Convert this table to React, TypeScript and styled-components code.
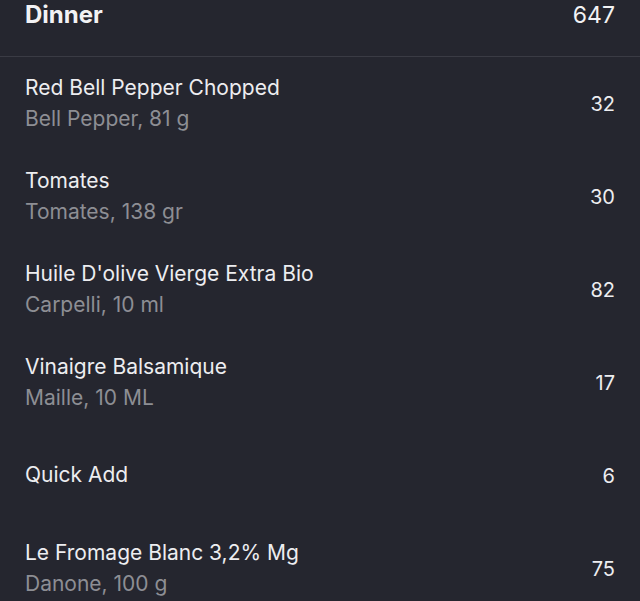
import React from "react";
import styled, { createGlobalStyle } from "styled-components";

const Global = createGlobalStyle`
  html, body { margin: 0; padding: 0; background: #25262f; }
  body { font-family: Inter, "Noto Sans", sans-serif; -webkit-font-smoothing: antialiased; }
`;

const Page = styled.div`
  width: 640px;
  height: 601px;
  overflow: hidden;
  background: #25262f;
`;

const Header = styled.div`
  display: flex;
  justify-content: space-between;
  align-items: flex-start;
  height: 57px;
  padding: 1px 25px 0 25px;
  box-sizing: border-box;
  border-bottom: 1px solid #3a3b44;
`;

const HeaderTitle = styled.div`
  font-size: 24px;
  font-weight: 700;
  line-height: 28px;
  color: #f2f2f4;
`;

const HeaderValue = styled.div`
  font-size: 23px;
  font-weight: 400;
  line-height: 28px;
  color: #f2f2f4;
`;

const Row = styled.div`
  display: flex;
  justify-content: space-between;
  align-items: center;
  height: 93px;
  padding: 0 25px;
  box-sizing: border-box;
`;

const Texts = styled.div`
  display: flex;
  flex-direction: column;
  gap: 6px;
  padding-bottom: 2px;
`;

const Title = styled.div`
  font-size: 21px;
  line-height: 25px;
  color: #ededf0;
`;

const Sub = styled.div`
  font-size: 21px;
  line-height: 25px;
  color: #8d8e94;
`;

const Value = styled.div`
  font-size: 20px;
  line-height: 24px;
  color: #ededf0;
`;

const items = [
  { t: "Red Bell Pepper Chopped", s: "Bell Pepper, 81 g", v: 32 },
  { t: "Tomates", s: "Tomates, 138 gr", v: 30 },
  { t: "Huile D'olive Vierge Extra Bio", s: "Carpelli, 10 ml", v: 82 },
  { t: "Vinaigre Balsamique", s: "Maille, 10 ML", v: 17 },
  { t: "Quick Add", s: "", v: 6 },
  { t: "Le Fromage Blanc 3,2% Mg", s: "Danone, 100 g", v: 75 },
];

export default function App() {
  return (
    <Page>
      <Global />
      <Header>
        <HeaderTitle>Dinner</HeaderTitle>
        <HeaderValue>647</HeaderValue>
      </Header>
      {items.map((it) => (
        <Row key={it.t}>
          <Texts>
            <Title>{it.t}</Title>
            {it.s && <Sub>{it.s}</Sub>}
          </Texts>
          <Value>{it.v}</Value>
        </Row>
      ))}
    </Page>
  );
}
